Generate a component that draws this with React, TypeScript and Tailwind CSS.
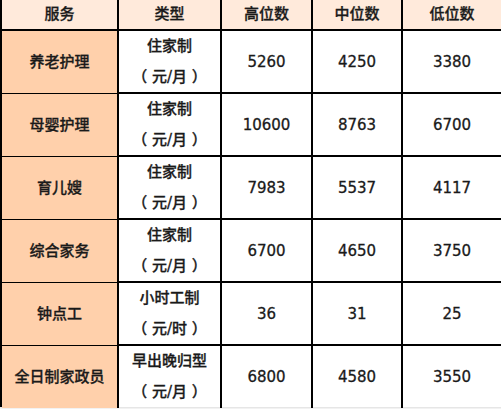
import React from "react";

const rows = [
  { s: "养老护理", t1: "住家制", t2: "（ 元/月 ）", h: "5260", m: "4250", l: "3380" },
  { s: "母婴护理", t1: "住家制", t2: "（ 元/月 ）", h: "10600", m: "8763", l: "6700" },
  { s: "育儿嫂", t1: "住家制", t2: "（ 元/月 ）", h: "7983", m: "5537", l: "4117" },
  { s: "综合家务", t1: "住家制", t2: "（ 元/月 ）", h: "6700", m: "4650", l: "3750" },
  { s: "钟点工", t1: "小时工制", t2: "（ 元/时 ）", h: "36", m: "31", l: "25" },
  { s: "全日制家政员", t1: "早出晚归型", t2: "（ 元/月 ）", h: "6800", m: "4580", l: "3550" },
];

const grid = "grid grid-cols-[117px_103px_91px_90px_98px]";

export default function App() {
  return (
    <div
      className="w-[501px] h-[409px] overflow-hidden bg-white text-[15px] font-medium text-[#1a1a1a] [-webkit-text-stroke:0.3px_#1a1a1a]"
      style={{ fontFamily: '"DejaVu Sans", "Noto Sans CJK SC", sans-serif' }}
    >
      <div className="border-l-2 border-black">
        <div className={`${grid} h-[31px] bg-[#ffeadb] border-b-2 border-black`}>
          {["服务", "类型", "高位数", "中位数", "低位数"].map((h, i) => (
            <div
              key={h}
              className={`flex items-center justify-center ${i < 4 ? "border-r-2 border-black" : ""}`}
            >
              {h}
            </div>
          ))}
        </div>
        {rows.map((r, idx) => (
          <div
            key={r.s}
            className={`${grid} ${idx < rows.length - 1 ? "h-[63px] border-b-2 border-black" : "h-[61px]"}`}
          >
            <div className="flex items-center justify-center bg-[#ffd0ab] border-r-2 border-black">
              {r.s}
            </div>
            <div className="flex flex-col items-center justify-center leading-[31px] border-r-2 border-black whitespace-pre">
              <span>{r.t1}</span>
              <span>{r.t2}</span>
            </div>
            <div className="flex items-center justify-center border-r-2 border-black">{r.h}</div>
            <div className="flex items-center justify-center border-r-2 border-black">{r.m}</div>
            <div className="flex items-center justify-center">{r.l}</div>
          </div>
        ))}
      </div>
      <div className="h-[3px] bg-[#f2f2f2] border-t border-[#e6e6e6]" />
    </div>
  );
}
